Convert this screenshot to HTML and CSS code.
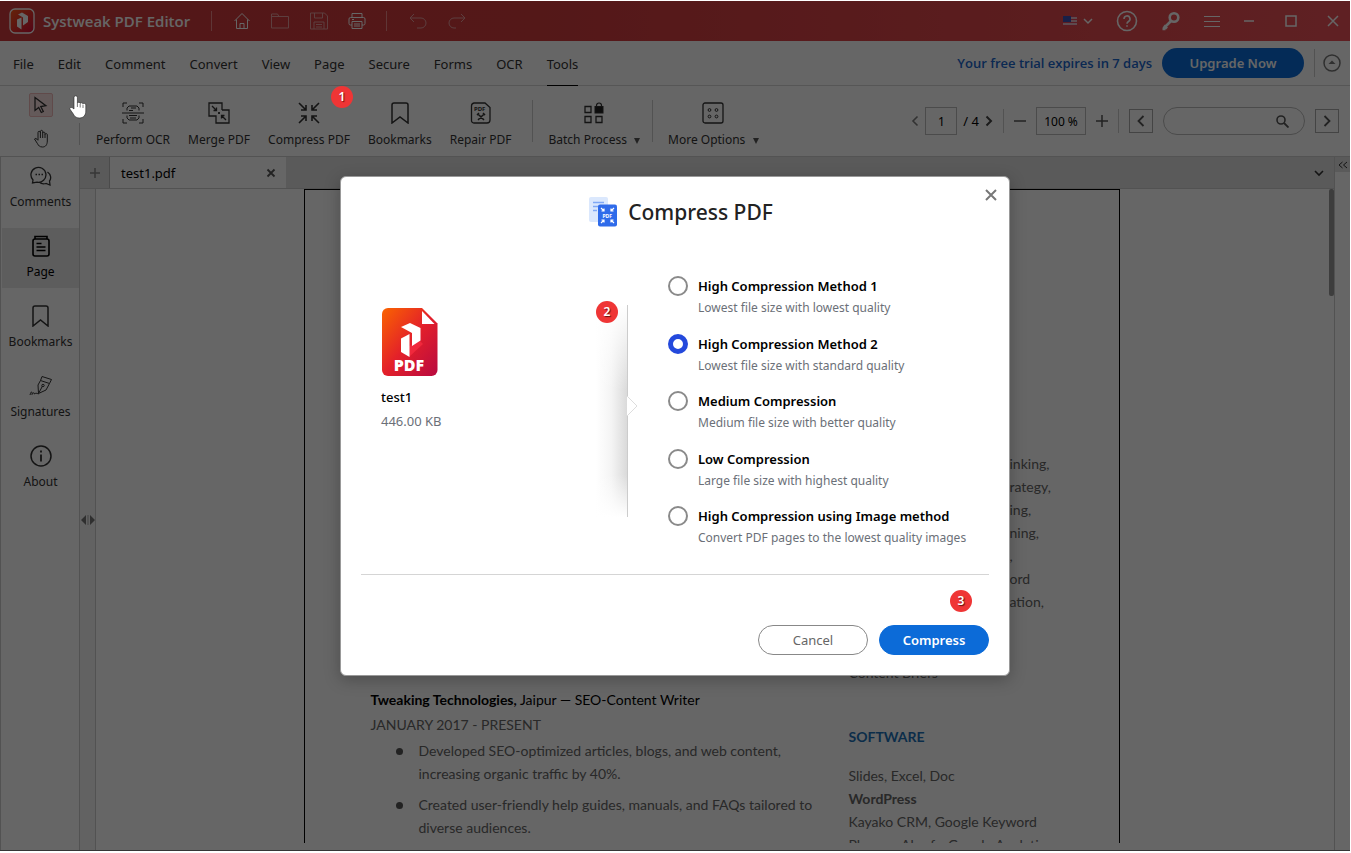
FILE: index.html
```html
<!DOCTYPE html>
<html lang="en">
<head>
    <meta charset="UTF-8">
    <meta name="viewport" content="width=device-width, initial-scale=1.0">
    <title>Systweak PDF Editor</title>
    <link rel="stylesheet" href="styles.css">
</head>
<body>
    <div class="app">
        <header class="titlebar">
            <svg class="logo" width="26" height="26" viewBox="0 0 26 26">
                <defs>
                    <linearGradient id="logo-red" x1="0" y1="0" x2="1" y2="1">
                        <stop offset="0" stop-color="#ff5a1a"/>
                        <stop offset="1" stop-color="#d00a3a"/>
                    </linearGradient>
                </defs>
                <rect x="1" y="1" width="24" height="24" rx="5" fill="url(#logo-red)" stroke="#fff" stroke-width="1.3"/>
                <path d="M9 6.500l4-2 6 3.500v6l-5 3.500V9.500z" fill="#fff"/>
                <path d="M8 11.500l4.500-2v12L8 18.500z" fill="#fff"/>
            </svg>
            <h1 class="app-name">Systweak PDF Editor</h1>
            <span class="divider"></span>
            <div class="quick-tools">
                <button aria-label="Home"><svg width="18" height="18" viewBox="0 0 18 18"><path d="M1.500 9L9 1.500 16.500 9M3.500 7.500v9h11v-9M7 16.500v-5h4v5"/></svg></button>
                <button class="faded" aria-label="Open"><svg width="20" height="18" viewBox="0 0 20 18"><path d="M1.500 16V2h6l1.500 2.500h9.500V16zM1.500 4.500H9"/></svg></button>
                <button class="faded" aria-label="Save"><svg width="20" height="18" viewBox="0 0 20 18"><path d="M1.500 1h14l3 3v13h-17zM5.500 1v5h8V1M5 17v-7h10v7M7 12.500h6M7 15h6"/></svg></button>
                <button aria-label="Print"><svg width="18" height="18" viewBox="0 0 18 18"><path d="M4 5.500V1.500h10v4M4 13H2.500a1.500 1.500 0 0 1-1.500-1.500V7a1.500 1.500 0 0 1 1.500-1.500h13A1.500 1.500 0 0 1 17 7v4.500a1.500 1.500 0 0 1-1.500 1.500H14M4 9.500h10v7H4zM6 12h6M6 14h6M4 7.500h2"/></svg></button>
            </div>
            <span class="divider"></span>
            <div class="quick-tools faded">
                <button aria-label="Undo"><svg width="20" height="18" viewBox="0 0 20 18"><path d="M6 2L2 6l4 4M2 6h11a5 5 0 0 1 0 10H9"/></svg></button>
                <button aria-label="Redo"><svg width="20" height="18" viewBox="0 0 20 18"><path d="M14 2l4 4-4 4M18 6H7a5 5 0 0 0 0 10h2"/></svg></button>
            </div>
            <div class="header-tools">
                <button class="language" aria-label="Language">
                    <svg width="14" height="10" viewBox="0 0 14 10">
                        <rect width="14" height="10" fill="#e8b8c4"/>
                        <path d="M0 .5h14M0 3.500h14M0 6.500h14M0 9.500h14" stroke="#e0485a"/>
                        <rect width="8" height="6" fill="#3c50b4"/>
                    </svg>
                    <svg width="10" height="8" viewBox="0 0 10 8"><path d="M1 2l4 4 4-4" stroke-width="1.500"/></svg>
                </button>
                <button aria-label="Help"><svg width="22" height="22" viewBox="0 0 22 22"><circle cx="11" cy="11" r="9.500" stroke-width="1.600"/><path d="M8 9a3 3 0 1 1 4.500 2.500c-1 .6-1.500 1-1.500 2.200M11 15.200v1.600" stroke-width="1.600"/></svg></button>
                <button aria-label="Register"><svg width="20" height="20" viewBox="0 0 20 20"><circle cx="13" cy="6.500" r="4.300" stroke-width="2.600"/><path d="M10 10l-7.500 7.500M3 14.500l3 3M1.500 18h3" stroke-width="2.600"/></svg></button>
                <button aria-label="Menu"><svg width="16" height="12" viewBox="0 0 16 12"><path d="M0 1.500h16M0 6.500h16M0 11.500h16"/></svg></button>
                <div class="window-tools">
                    <button aria-label="Minimize"><svg width="12" height="12" viewBox="0 0 12 12"><path d="M1 6h10" stroke-width="1.500"/></svg></button>
                    <button aria-label="Maximize"><svg width="12" height="12" viewBox="0 0 12 12"><rect x="1" y="1" width="10" height="10" stroke-width="1.500"/></svg></button>
                    <button aria-label="Close"><svg width="12" height="12" viewBox="0 0 12 12"><path d="M1 1l10 10M11 1L1 11" stroke-width="1.500"/></svg></button>
                </div>
            </div>
        </header>

        <nav class="menubar">
            <div class="menus">
                <button>File</button>
                <button>Edit</button>
                <button>Comment</button>
                <button>Convert</button>
                <button>View</button>
                <button>Page</button>
                <button>Secure</button>
                <button>Forms</button>
                <button>OCR</button>
                <button class="active">Tools</button>
            </div>
            <p class="trial">Your free trial expires in 7 days</p>
            <button class="upgrade">Upgrade Now</button>
            <span class="divider"></span>
            <button class="collapse" aria-label="Collapse ribbon"><svg width="18" height="18" viewBox="0 0 18 18"><circle cx="9" cy="9" r="8" stroke="#777" stroke-width="1.500"/><path d="M5.500 10l3.500-3.500 3.500 3.500z" fill="#777" stroke="none"/></svg></button>
        </nav>

        <div class="toolbar">
            <div class="pointers">
                <button class="selected" aria-label="Select"><svg width="16" height="18" viewBox="0 0 16 18"><path d="M2 1.500v13l3.700-3 2.600 5 2-1-2.500-5 5-.8z" stroke-width="1.300"/></svg></button>
                <button aria-label="Pan"><svg width="16" height="19" viewBox="0 0 16 19"><path d="M5 11V3.500a1.200 1.200 0 0 1 2.400 0V9M7.400 4V2.200a1.200 1.200 0 0 1 2.300 0V9M9.700 4a1.200 1.200 0 0 1 2.300 0v5M12 5.500a1.200 1.200 0 0 1 2.300 0V12c0 3.500-1.500 6-4.800 6-3 0-4-1.500-5-3.300L1.500 10c.8-1 2-.8 3.500 1.500"/></svg></button>
            </div>
            <span class="divider short"></span>
            <div class="tools">
                <button class="tool">
                    <svg width="22" height="22" viewBox="0 0 22 22"><path d="M1 5V1h4M17 1h4v4M21 17v4h-4M5 21H1v-4M0 11h22M5 8.500V6l2-2h8l2 2v2.500M5 13.500V16l2 2h8l2-2v-2.500M7 8.500h4M7 13.500h8M8 16h6M9 6h5"/></svg>
                    Perform OCR
                </button>
                <button class="tool">
                    <svg width="22" height="22" viewBox="0 0 22 22"><path d="M14 8V1H1v13h7v7h13V8h-7M4 4l4.500 4.500M8.500 5.500v3h-3M18 18l-4.500-4.500M13.500 16.500v-3h3M11 10v2M10 11h2" stroke-width="1.300"/></svg>
                    Merge PDF
                </button>
                <button class="tool">
                    <svg width="22" height="22" viewBox="0 0 22 22"><path d="M1 1l7 7M8 3v5H3M21 1l-7 7M14 3v5h5M1 21l7-7M3 14h5v5M21 21l-7-7M14 19v-5h5" stroke-width="1.600"/></svg>
                    Compress PDF
                </button>
                <button class="tool">
                    <svg width="22" height="22" viewBox="0 0 22 22"><path d="M3 21V3a2 2 0 0 1 2-2h12a2 2 0 0 1 2 2v18l-8-6z" stroke-width="1.500"/></svg>
                    Bookmarks
                </button>
                <button class="tool">
                    <svg width="22" height="22" viewBox="0 0 22 22"><path d="M4 1h11l5 4.500V18a3 3 0 0 1-3 3H4a2.500 2.500 0 0 1-2.500-3V4A3 3 0 0 1 4 1z" stroke-width="1.300"/><path d="M8 12l6 6M14 12l-6 6M7 13l2-2M13 11l2 2" stroke-width="1.500"/><text class="glyph" x="4" y="9">PDF</text></svg>
                    Repair PDF
                </button>
            </div>
            <span class="divider"></span>
            <button class="tool">
                <svg width="20" height="22" viewBox="0 0 20 22"><path d="M1 4.500h6v6H1zM1 14.500h6v6H1zM12 14.500h6v6h-6z" stroke-width="1.300"/><rect x="11" y="4.500" width="8" height="6.500" fill="#222"/><path d="M12.500 5V3.500a2.500 2.500 0 0 1 5 0V5" stroke-width="1.200"/></svg>
                <span>Batch Process <i class="caret"></i></span>
            </button>
            <span class="divider"></span>
            <button class="tool">
                <svg width="22" height="22" viewBox="0 0 22 22"><rect x="1" y="1" width="20" height="20" rx="2" stroke-width="1.300"/><circle cx="7.500" cy="8" r="1.400"/><circle cx="14.500" cy="8" r="1.400"/><circle cx="7.500" cy="14.500" r="1.400"/><circle cx="14.500" cy="14.500" r="1.400"/></svg>
                <span>More Options <i class="caret"></i></span>
            </button>
            <div class="view-tools">
                <div class="page-nav">
                    <button class="faded" aria-label="Previous page"><svg width="8" height="12" viewBox="0 0 8 12"><path d="M6.500 1.500L2 6l4.500 4.500" stroke-width="1.600"/></svg></button>
                    <input class="page-number" type="text" value="1" aria-label="Page number">
                    <span>/ 4</span>
                    <button aria-label="Next page"><svg width="8" height="12" viewBox="0 0 8 12"><path d="M1.500 1.500L6 6l-4.500 4.500" stroke="#444" stroke-width="2"/></svg></button>
                </div>
                <span class="divider"></span>
                <button aria-label="Zoom out"><svg width="12" height="12" viewBox="0 0 12 12"><path d="M0 6h12" stroke-width="1.500"/></svg></button>
                <input class="zoom-level" type="text" value="100 %" aria-label="Zoom">
                <button aria-label="Zoom in"><svg width="12" height="12" viewBox="0 0 12 12"><path d="M0 6h12M6 0v12" stroke-width="1.500"/></svg></button>
                <span class="divider"></span>
                <button class="boxed" aria-label="Find previous"><svg width="8" height="12" viewBox="0 0 8 12"><path d="M6.500 1L1.500 6l5 5" stroke-width="1.800"/></svg></button>
                <label class="search">
                    <input type="text" aria-label="Search">
                    <svg width="13" height="13" viewBox="0 0 13 13"><circle cx="5" cy="5" r="4" stroke-width="1.600"/><path d="M8 8l4.500 4.500" stroke-width="1.800"/></svg>
                </label>
                <button class="boxed" aria-label="Find next"><svg width="8" height="12" viewBox="0 0 8 12"><path d="M1.500 1l5 5-5 5" stroke-width="1.800"/></svg></button>
            </div>
        </div>

        <div class="workspace">
            <aside class="sidebar">
                <button>
                    <svg width="22" height="22" viewBox="0 0 22 22"><path d="M3 15a7.500 7.500 0 1 1 4 2.200L2.500 18zM17.500 7c3.500 2.500 4 6.500 2 9l.5 4-4-1.500c-2.500.8-5 .3-6.500-1.200" stroke-width="1.300"/><path d="M5.500 9.500h1.500M8.500 9.500h1.500M11.500 9.500h1.500" stroke-width="1.600"/></svg>
                    Comments
                </button>
                <button class="current">
                    <svg width="22" height="22" viewBox="0 0 22 22"><path d="M5 4V1.500h12V4M5 4h12a2 2 0 0 1 2 2v13a2 2 0 0 1-2 2H5a2 2 0 0 1-2-2V6a2 2 0 0 1 2-2zM6.500 8.500h5M6.500 12h9M6.500 15.500h9" stroke-width="1.600"/></svg>
                    Page
                </button>
                <button>
                    <svg width="22" height="22" viewBox="0 0 22 22"><path d="M3 21V3a2 2 0 0 1 2-2h11a2 2 0 0 1 2 2v18l-7.500-6z" stroke-width="1.500"/></svg>
                    Bookmarks
                </button>
                <button>
                    <svg width="24" height="22" viewBox="0 0 24 22"><path d="M13 1.500l9.500 3-2 4-9-3zM11.500 5.500L9 10l.5 8.500L17 15l3.500-6.500M9.500 18.500l4-7.500M1 20c1-4 2.500-4 2-.5 1.500-2.500 2.500-2 2.500-.5 1-1 2-1 4 0"/><circle cx="14" cy="10.500" r="1.200"/></svg>
                    Signatures
                </button>
                <button>
                    <svg width="22" height="22" viewBox="0 0 22 22"><circle cx="11" cy="11" r="10" stroke-width="1.500"/><path d="M11 9.500v7M11 5.500v2" stroke-width="1.800"/></svg>
                    About
                </button>
            </aside>

            <main class="viewer">
                <div class="tabs">
                    <button class="new-tab" aria-label="New tab"><svg width="10" height="10" viewBox="0 0 10 10"><path d="M0 5h10M5 0v10" stroke-width="1.500"/></svg></button>
                    <div class="tab">
                        <span>test1.pdf</span>
                        <button aria-label="Close tab"><svg width="10" height="10" viewBox="0 0 10 10"><path d="M1.500 1.500l7 7M8.500 1.500l-7 7" stroke-width="1.800"/></svg></button>
                    </div>
                    <button class="tab-list" aria-label="All tabs"><svg width="10" height="8" viewBox="0 0 10 8"><path d="M1 2l4 4 4-4" stroke-width="1.600"/></svg></button>
                </div>
                <div class="canvas">
                    <div class="splitter"><svg width="14" height="10" viewBox="0 0 14 10"><path d="M5 0v10L0 5zM9 0v10l5-5z" fill="#777" stroke="none"/><path d="M7 0v10" stroke="#aaa"/></svg></div>
                    <article class="page">
                        <section class="experience">
                            <p class="job"><b>Tweaking Technologies,</b> Jaipur — SEO-Content Writer</p>
                            <p class="dates">JANUARY 2017 - PRESENT</p>
                            <ul>
                                <li>Developed SEO-optimized articles, blogs, and web content,<br>increasing organic traffic by 40%.</li>
                                <li>Created user-friendly help guides, manuals, and FAQs tailored to<br>diverse audiences.</li>
                            </ul>
                        </section>
                        <section class="skills">
                            <p class="skill-ends">inking,<br>rategy,<br>ing,<br>ning,<br>,<br>ord<br>ation,</p>
                            <p class="briefs">Content Briefs</p>
                            <h2>SOFTWARE</h2>
                            <p>Slides, Excel, Doc<br><b>WordPress</b><br>Kayako CRM, Google Keyword<br>Planner, Ahrefs, Google Analyti</p>
                        </section>
                    </article>
                    <div class="scrollbar"></div>
                </div>
            </main>

            <div class="right-rail">
                <button aria-label="Show panel"><svg width="10" height="8" viewBox="0 0 10 8"><path d="M4.500 1L1 4l3.500 3M9 1L5.500 4 9 7"/></svg></button>
            </div>
        </div>
    </div>

    <div class="overlay">
        <form class="modal" role="dialog" aria-labelledby="modal-title">
            <button class="modal-close" type="button" aria-label="Close"><svg width="12" height="12" viewBox="0 0 12 12"><path d="M1 1l10 10M11 1L1 11" stroke="#777" stroke-width="2"/></svg></button>
            <div class="modal-header">
                <svg width="29" height="30" viewBox="0 0 29 30">
                    <rect x="0" y="0" width="19" height="25" rx="2" fill="#dbe8fd"/>
                    <path d="M4 5.500h11M4 9.500h6M4 13.500h4" stroke="#7fa8f5" stroke-width="1.500"/>
                    <rect x="9" y="7.500" width="19" height="22" rx="2" fill="#2f6bea"/>
                    <path d="M12 11l3 3M15 11.500V14h-2.500M25 11l-3 3M22 11.500V14h2.500M12 26l3-3M15 25.500V23h-2.500M25 26l-3-3M22 25.500V23h2.500" stroke="#fff" stroke-width="1.200" fill="none"/>
                    <text x="13.500" y="20.500" class="icon-text">PDF</text>
                </svg>
                <h2 id="modal-title">Compress PDF</h2>
            </div>

            <div class="modal-body">
                <div class="file">
                    <svg width="57" height="70" viewBox="0 0 57 70">
                        <defs>
                            <linearGradient id="file-red" x1="0" y1="0" x2="1" y2="1">
                                <stop offset="0" stop-color="#fa6400"/>
                                <stop offset=".5" stop-color="#e3202a"/>
                                <stop offset="1" stop-color="#b80a40"/>
                            </linearGradient>
                        </defs>
                        <path d="M7 1h34l15.500 15.500V63a6 6 0 0 1-6 6H7a6 6 0 0 1-6-6V7a6 6 0 0 1 6-6z" fill="url(#file-red)"/>
                        <path d="M41 4v13h12.500z" fill="#fff"/>
                        <path d="M39 34l3 3-14 13V39z" fill="#f0283c"/>
                        <path d="M20 20l9-4 10.500 5v12.500L31 39V26z" fill="#fff"/>
                        <path d="M20 31.500l8.500-4.500v23L20 45z" fill="#fff"/>
                        <text x="28" y="64" class="file-type">PDF</text>
                    </svg>
                    <p class="file-name">test1</p>
                    <p class="file-size">446.00 KB</p>
                </div>
                <div class="separator">
                    <svg width="11" height="20" viewBox="0 0 11 20"><path d="M0 0l10 10L0 20" fill="#fff" stroke="#ddd"/></svg>
                    <span class="step step-two">2</span>
                </div>
                <div class="methods">
                    <label class="method">
                        <input type="radio" name="method">
                        <span class="method-text"><b>High Compression Method 1</b><small>Lowest file size with lowest quality</small></span>
                    </label>
                    <label class="method">
                        <input type="radio" name="method" checked>
                        <span class="method-text"><b>High Compression Method 2</b><small>Lowest file size with standard quality</small></span>
                    </label>
                    <label class="method">
                        <input type="radio" name="method">
                        <span class="method-text"><b>Medium Compression</b><small>Medium file size with better quality</small></span>
                    </label>
                    <label class="method">
                        <input type="radio" name="method">
                        <span class="method-text"><b>Low Compression</b><small>Large file size with highest quality</small></span>
                    </label>
                    <label class="method">
                        <input type="radio" name="method">
                        <span class="method-text"><b>High Compression using Image method</b><small>Convert PDF pages to the lowest quality images</small></span>
                    </label>
                </div>
            </div>

            <div class="modal-footer">
                <span class="step step-three">3</span>
                <button class="btn" type="button">Cancel</button>
                <button class="btn btn-primary" type="button">Compress</button>
            </div>
        </form>
        <span class="step step-one">1</span>
        <svg class="hand" width="18" height="24" viewBox="0 0 18 24"><path d="M5 14V2.500a1.700 1.700 0 0 1 3.400 0V8a1.500 1.500 0 0 1 2.800.5 1.500 1.500 0 0 1 2.800.7 1.500 1.500 0 0 1 2.800 1V16c0 4-2 7-6.500 7-3.500 0-5-2-6.300-4.500L.8 14C.5 12.500 2.500 11.500 5 14z" fill="#fff" stroke="#222" stroke-width=".6"/><path d="M8.400 8v4M11.200 9v3.500M14 10v3" stroke="#555" stroke-width=".8"/></svg>
    </div>
</body>
</html>
```
FILE: styles.css
```css
* {
    margin: 0;
    padding: 0;
    box-sizing: border-box;
}

body {
    height: 100vh;
    padding: 1px 1px 2px 0;
    overflow: hidden;
    background: #fff;
    color: #333;
    font-family: "Noto Sans", "Open Sans", sans-serif;
    font-size: 13px;
}

button {
    border: none;
    background: none;
    color: inherit;
    font: inherit;
}

input {
    font: inherit;
    color: inherit;
}

svg {
    display: block;
    flex: none;
}

.app {
    height: 100%;
    display: flex;
    flex-direction: column;
    background: #fff;
}

.app svg {
    fill: none;
    stroke: currentColor;
}

.divider {
    flex: none;
    width: 1px;
    height: 42px;
    background: #ccc;
}

.faded {
    opacity: 0.5;
}

/* Title bar */
.titlebar {
    flex: none;
    height: 40px;
    padding: 0 11px 0 9px;
    display: flex;
    align-items: center;
    background: linear-gradient(90deg, #cf3a3c, #d23c3e 40%, #ee5258);
    color: #fff;
}

.titlebar .logo {
    stroke: none;
}

.titlebar .divider {
    height: 20px;
    background: #e88;
}

.app-name {
    width: 176px;
    padding-left: 8px;
    font-family: "Open Sans", "Noto Sans", sans-serif;
    font-size: 15px;
    font-weight: 600;
    white-space: nowrap;
}

.quick-tools {
    display: flex;
    gap: 19px;
    padding: 0 20px 0 21px;
}

.header-tools {
    margin-left: auto;
    display: flex;
    align-items: center;
    gap: 23px;
}

.window-tools {
    display: flex;
    gap: 30px;
}

.language {
    display: flex;
    align-items: center;
    gap: 6px;
}

.language svg:first-child {
    stroke: none;
}

/* Menu bar */
.menubar {
    flex: none;
    height: 45px;
    padding: 0 9px 0 13px;
    display: flex;
    align-items: center;
    border-bottom: 1px solid #d8d8d8;
}

.menus {
    display: flex;
    align-self: stretch;
    gap: 24px;
}

.menus button {
    height: 45px;
}

.menus .active {
    box-shadow: inset 0 -1px #000;
}

.trial {
    margin-left: auto;
    color: #1a66cc;
    font-family: "Open Sans", "Noto Sans", sans-serif;
    font-weight: 600;
}

.upgrade {
    width: 142px;
    height: 30px;
    margin: 0 10px;
    border-radius: 15px;
    background: #0a6cda;
    color: #fff;
    font-size: 13px;
    font-weight: 600;
}

.menubar .divider {
    height: 28px;
}

.collapse {
    margin-left: 8px;
}

/* Toolbar */
.toolbar {
    flex: none;
    height: 71px;
    padding-right: 11px;
    display: flex;
    align-items: center;
    border-bottom: 1px solid #d0d0d0;
}

.pointers {
    width: 79px;
    padding: 1px 0 0 2px;
    display: flex;
    flex-direction: column;
    align-items: center;
    gap: 10px;
}

.pointers button {
    width: 24px;
    height: 24px;
    display: grid;
    place-items: center;
}

.pointers .selected {
    border: 1px solid #f0b8b8;
    border-radius: 2px;
    background: #fbe2e2;
}

.toolbar .short {
    height: 22px;
    margin-top: 26px;
}

.tools {
    display: flex;
    gap: 18px;
    padding: 0 21px 0 16px;
}

.tool {
    height: 46px;
    margin-top: 8px;
    display: flex;
    flex-direction: column;
    align-items: center;
    justify-content: space-between;
    white-space: nowrap;
    font-size: 12px;
    line-height: 16px;
}

.toolbar > .tool {
    margin: 8px 12px 0 15px;
}

.caret {
    display: inline-block;
    margin-left: 4px;
    border: 3px solid transparent;
    border-top: 6px solid #555;
    border-bottom: none;
}

.glyph {
    fill: #333;
    stroke: none;
    font-size: 6px;
    font-weight: 700;
}

.view-tools {
    margin-left: auto;
    display: flex;
    align-items: center;
    gap: 10px;
    color: #555;
}

.page-nav {
    display: flex;
    align-items: center;
    gap: 6px;
    color: #000;
}

.view-tools .divider {
    height: 24px;
}

.page-number,
.zoom-level {
    width: 32px;
    height: 28px;
    border: 1px solid #bbb;
    background: #fff;
    color: #000;
    font-size: 12px;
    text-align: center;
}

.zoom-level {
    width: 50px;
}

.boxed {
    width: 24px;
    height: 24px;
    display: grid;
    place-items: center;
    border: 1px solid #aaa;
}

.search {
    width: 142px;
    height: 28px;
    padding-right: 15px;
    display: flex;
    align-items: center;
    border: 1px solid #bbb;
    border-radius: 14px;
}

.search input {
    flex: 1;
    min-width: 0;
    margin-left: 14px;
    border: none;
    background: none;
}

/* Workspace */
.workspace {
    flex: 1;
    min-height: 0;
    display: flex;
    border-bottom: 1px solid #888;
}

.sidebar {
    flex: none;
    width: 80px;
    padding: 1px 0 0 1px;
    display: flex;
    flex-direction: column;
    gap: 10px;
    border: 1px solid #ccc;
    border-width: 0 1px;
}

.sidebar button {
    height: 60px;
    padding-top: 7px;
    display: flex;
    flex-direction: column;
    align-items: center;
    gap: 6px;
    font-size: 12px;
    line-height: 18px;
}

.sidebar .current {
    background: #e8e8e8;
    color: #000;
}

.viewer {
    flex: 1;
    min-width: 0;
    display: flex;
    flex-direction: column;
}

.tabs {
    flex: none;
    height: 32px;
    display: flex;
    background: #e2e2e2;
    border-bottom: 1px solid #ccc;
}

.new-tab {
    width: 30px;
    display: grid;
    place-items: center;
    border-right: 1px solid #bbb;
    color: #888;
}

.tab {
    width: 176px;
    padding: 0 10px 0 11px;
    display: flex;
    align-items: center;
    justify-content: space-between;
    background: #fff;
    color: #000;
}

.tab button {
    color: #555;
}

.tab-list {
    margin-left: auto;
    padding: 0 10px;
}

.canvas {
    flex: 1;
    min-height: 0;
    display: flex;
    padding-bottom: 7px;
    background: #fff;
}

.splitter {
    flex: none;
    width: 16px;
    margin-bottom: -7px;
    display: grid;
    place-items: center;
    border-right: 1px solid #ccc;
    background: #f6f6f6;
}

.page {
    width: 816px;
    margin: 0 auto;
    padding: 0 66px;
    overflow: hidden;
    display: flex;
    justify-content: space-between;
    border: 1px solid #000;
    border-bottom: none;
    background: #fff;
    color: #666;
    font-family: Lato, "Open Sans", sans-serif;
    font-size: 14px;
    line-height: 23px;
}

.experience {
    padding-top: 498px;
    white-space: nowrap;
}

.job {
    color: #000;
}

.dates {
    margin: 2px 0 3px;
}

.experience ul {
    padding-left: 48px;
    list-style: none;
}

.experience li {
    margin-bottom: 8px;
}

.experience li::before {
    content: "";
    display: inline-block;
    width: 7px;
    height: 7px;
    margin: 0 16px 1px -23px;
    border-radius: 50%;
    background: #555;
}

.skills {
    width: 204px;
    padding-top: 262px;
    white-space: nowrap;
}

.skill-ends {
    padding-left: 161px;
}

.briefs {
    margin: 48px 0 41px;
}

.skills h2 {
    margin-bottom: 16px;
    color: #1d72b8;
    font-size: 14px;
}

.scrollbar {
    flex: none;
    width: 5px;
    height: 107px;
    margin-left: 2px;
    border-radius: 2px;
    background: #999;
}

.right-rail {
    flex: none;
    width: 16px;
    border-left: 1px solid #ccc;
}

.right-rail button {
    width: 15px;
    height: 15px;
    display: grid;
    place-items: center;
    background: #e2e2e2;
}

/* Dialog */
.overlay {
    position: absolute;
    inset: 1px 1px 2px 0;
    display: grid;
    place-items: center;
    background: rgba(0, 0, 0, 0.6);
}

.modal {
    position: relative;
    width: 670px;
    max-width: 96%;
    padding: 20px;
    border: 1px solid #999;
    border-radius: 6px;
    background: #fff;
    box-shadow: 0 4px 16px rgba(0, 0, 0, 0.25);
}

.modal-close {
    position: absolute;
    top: 12px;
    right: 12px;
}

.modal-header {
    padding-left: 12px;
    display: flex;
    justify-content: center;
    gap: 10px;
}

.modal-header h2 {
    color: #222;
    font-size: 21px;
    font-weight: 500;
    line-height: 30px;
}

.icon-text {
    fill: #fff;
    font-size: 5px;
    font-weight: 700;
}

.modal-body {
    display: flex;
    padding: 48px 0 25px;
    border-bottom: 1px solid #d5d5d5;
}

.file {
    flex: 1;
    padding: 32px 20px 0;
}

.file-type {
    fill: #fff;
    font-family: "Open Sans", sans-serif;
    font-size: 16px;
    font-weight: 800;
    text-anchor: middle;
}

.file-name {
    margin-top: 9px;
    color: #000;
    font-weight: 500;
    line-height: 22px;
}

.file-size {
    color: #6b7078;
    line-height: 26px;
}

.separator {
    position: relative;
    width: 32px;
    height: 212px;
    margin-top: 30px;
    border-right: 1px solid #ccc;
    background:
        linear-gradient(#fff, transparent 40%, transparent 80%, #fff),
        linear-gradient(90deg, #fff, #f4f4f4 50%, #dadada);
}

.separator svg {
    position: absolute;
    top: 91px;
    right: -11px;
}

.methods {
    width: 361px;
    min-height: 274px;
    padding-left: 40px;
    display: flex;
    flex-direction: column;
    justify-content: space-between;
}

.method {
    display: flex;
    gap: 10px;
}

.method input {
    flex: none;
    width: 20px;
    height: 20px;
    margin-top: 1px;
    appearance: none;
    border: 2px solid #8a8a8a;
    border-radius: 50%;
    background: #fff;
}

.method input:checked {
    border: 5px solid #2449dc;
}

.method-text {
    display: flex;
    flex-direction: column;
    white-space: nowrap;
    line-height: 22px;
}

.method b {
    color: #000;
    font-weight: 600;
}

.method small {
    color: #6b7078;
    font-size: 12px;
}

.modal-footer {
    position: relative;
    padding-top: 50px;
    display: flex;
    justify-content: flex-end;
    gap: 11px;
}

.btn {
    width: 110px;
    height: 30px;
    border: 1px solid #888;
    border-radius: 15px;
    background: #fff;
    color: #666;
}

.btn-primary {
    border-color: #0c6bd8;
    background: #0c6bd8;
    color: #fff;
    font-weight: 600;
}

/* Numbered step markers */
.step {
    position: absolute;
    width: 22px;
    height: 22px;
    border-radius: 50%;
    background: #ef3535;
    color: #fff;
    font-size: 12px;
    font-weight: 600;
    line-height: 22px;
    text-align: center;
    text-shadow: 1px 1px 1px #611;
}

.step-one {
    top: 85px;
    left: 331px;
}

.step-two {
    top: -4px;
    left: 0;
}

.step-three {
    top: 15px;
    right: 17px;
}

.hand {
    position: absolute;
    top: 94px;
    left: 69px;
}
```
